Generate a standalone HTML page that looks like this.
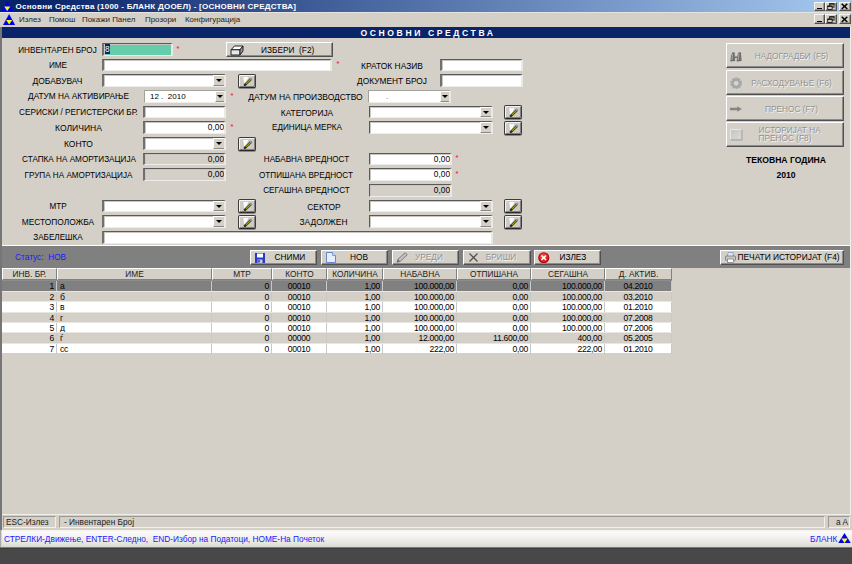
<!DOCTYPE html>
<html lang="mk"><head><meta charset="utf-8"><title>Основни Средства</title>
<style>
*{box-sizing:border-box;margin:0;padding:0}
html,body{width:852px;height:564px;overflow:hidden}
body{background:#d4d0c8;font-family:"Liberation Sans",sans-serif;font-size:8.3px;color:#000;position:relative}
.a{position:absolute;white-space:nowrap}
.l{position:absolute;white-space:nowrap;text-align:center;height:12px;line-height:12px;font-size:8.3px;color:#000}
.f{position:absolute;height:12px;background:#fff;border-top:1px solid #5a5a5a;border-left:1px solid #5a5a5a;border-bottom:1px solid #efede9;border-right:2px solid #ebe9e4;box-shadow:inset 1px 1px 0 #c8c6c0;font-size:8.3px;line-height:10px;white-space:nowrap;overflow:hidden}
.f.w{border-left:2px solid #707070}
.f.g{background:#d4d0c8}
.f.lt{border-top-color:#a4a29c;border-left:1px solid #a4a29c;box-shadow:none}
.f.lt .dd{width:10px}
.f.lt .dd:after{left:1.2px}
.f.r{text-align:right;padding-right:0px}
.dd{position:absolute;right:-1px;top:0px;width:12px;height:10px;background:#d4d0c8;border-top:1px solid #fff;border-left:1px solid #fff;border-bottom:1px solid #8a8a8a;border-right:1px solid #8a8a8a}
.dd:after{content:"";position:absolute;left:2px;top:2.5px;border-left:3px solid transparent;border-right:3px solid transparent;border-top:3.2px solid #000}
.pb{position:absolute;width:18px;height:14px;background:#cecbc5;border:1px solid #3c3c3c;border-bottom-color:#2a2a2a;border-radius:2px;box-shadow:inset 1px 1px 0 #f4f4f4,inset -1px -1px 0 #808080,0 1px 0 rgba(50,50,50,0.45)}
.pb svg{position:absolute;left:1.5px;top:0.5px}
.st{position:absolute;color:#ff2c4c;font-size:7.5px;line-height:8px;font-weight:bold}
.b{position:absolute;background:#d4d0c8;border-top:1px solid #fff;border-left:1px solid #fff;border-bottom:1px solid #505050;border-right:1px solid #505050;box-shadow:inset -1px -1px 0 #8c8c8c;white-space:nowrap;font-size:8.3px}
.b span{position:absolute}
.dis{color:#929292;text-shadow:0.7px 0.7px 0 #f4f4f4}
.gh{position:absolute;top:268px;height:12px;background:#d4d0c8;border-top:1px solid #fff;border-left:1px solid #fff;border-right:1px solid #808080;border-bottom:1px solid #808080;text-align:center;line-height:10px;font-size:8.3px;color:#222;white-space:nowrap}
.gr{position:absolute;left:2px;width:670px;height:10px}
.c{position:absolute;top:0;height:10px;line-height:10px;font-size:8.6px;letter-spacing:-0.3px;white-space:nowrap;border-right:1px solid #c8c8c8;color:#000}
.c.r{text-align:right;padding-right:2px}
.c.m{text-align:center}
.c.lf{text-align:left;padding-left:3px}
.tb{position:absolute;width:10px;height:9px;background:#d4d0c8;border-top:1px solid #f6f6f4;border-left:1px solid #f6f6f4;border-bottom:1px solid #505050;border-right:1px solid #505050;box-shadow:inset -1px -1px 0 #9a9890}
.sp{position:absolute;top:516px;height:12px;border-top:1px solid #9a9892;border-left:1px solid #9a9892;border-bottom:1px solid #f2f1ee;border-right:1px solid #f2f1ee;font-size:8.3px;line-height:10px;white-space:nowrap;color:#222}
</style></head>
<body>
<div class="a" style="left:0;top:0;width:852px;height:12px;background:linear-gradient(90deg,#0a246a 0%,#0a246a 5%,#a6caf0 100%)"></div>
<svg class="a" style="left:1.3px;top:1px" width="12.4" height="10.4" viewBox="0 0 12.4 10.4" preserveAspectRatio="none"><polygon points="6.2,0 12.4,10.4 0,10.4" fill="#0000f0"/><polygon points="3.2,5.6 9.3,5.6 6.25,9.9" fill="#ffff00"/></svg>
<div class="a" style="left:15.6px;top:0;height:12px;line-height:13px;font-weight:bold;color:#fff;font-size:8px;letter-spacing:0.25px" id="ttl">Основни Средства (1000 - БЛАНК ДООЕЛ) - [ОСНОВНИ СРЕДСТВА]</div>
<div class="tb" style="left:814px;top:2px;width:11px;height:9px"><i class="a" style="left:1.5px;top:4.5px;width:5px;height:1.5px;background:#000"></i></div>
<div class="tb" style="left:825px;top:2px;width:12px;height:9px"><svg class="a" style="left:1.2px;top:-0.4px" width="8" height="7.2" viewBox="0 0 8 7.5"><rect x="2.6" y="0.9" width="4.6" height="3.4" fill="none" stroke="#111" stroke-width="0.9"/><rect x="2.2" y="0.3" width="5.4" height="1.2" fill="#111"/><rect x="0.6" y="3.3" width="4.6" height="3.4" fill="#d4d0c8" stroke="#111" stroke-width="0.9"/><rect x="0.2" y="2.7" width="5.4" height="1.2" fill="#111"/></svg></div>
<div class="tb" style="left:839px;top:2px;width:12px;height:9px"><svg class="a" style="left:0.8px;top:0.2px" width="7" height="6.6" viewBox="0 0 7 7" preserveAspectRatio="none"><path d="M0.7 0.7 L6.3 6.3 M6.3 0.7 L0.7 6.3" stroke="#000" stroke-width="1.5"/></svg></div>
<div class="a" style="left:0;top:12px;width:852px;height:1px;background:#e6e4de"></div>
<svg class="a" style="left:3px;top:13.8px" width="12.2" height="11" viewBox="0 0 12.4 10.4" preserveAspectRatio="none"><polygon points="6.2,0 12.4,10.4 0,10.4" fill="#0000f0"/><polygon points="3.2,5.6 9.3,5.6 6.25,9.9" fill="#ffff00"/></svg>
<div class="a mi" style="left:19px;top:13px;height:13px;line-height:13px;font-size:7.95px;color:#222">Излез</div>
<div class="a mi" style="left:49px;top:13px;height:13px;line-height:13px;font-size:7.95px;color:#222">Помош</div>
<div class="a mi" style="left:82px;top:13px;height:13px;line-height:13px;font-size:7.95px;color:#222">Покажи Панел</div>
<div class="a mi" style="left:145px;top:13px;height:13px;line-height:13px;font-size:7.95px;color:#222">Прозори</div>
<div class="a mi" style="left:185px;top:13px;height:13px;line-height:13px;font-size:7.95px;color:#222">Конфигурација</div>
<div class="tb" style="left:814px;top:14px;width:11px;height:10px"><i class="a" style="left:1.5px;top:5.5px;width:5px;height:1.5px;background:#000"></i></div>
<div class="tb" style="left:825px;top:14px;width:12px;height:10px"><svg class="a" style="left:1.2px;top:0.6px" width="8" height="7.2" viewBox="0 0 8 7.5"><rect x="2.6" y="0.9" width="4.6" height="3.4" fill="none" stroke="#111" stroke-width="0.9"/><rect x="2.2" y="0.3" width="5.4" height="1.2" fill="#111"/><rect x="0.6" y="3.3" width="4.6" height="3.4" fill="#d4d0c8" stroke="#111" stroke-width="0.9"/><rect x="0.2" y="2.7" width="5.4" height="1.2" fill="#111"/></svg></div>
<div class="tb" style="left:839px;top:14px;width:12px;height:10px"><svg class="a" style="left:0.8px;top:1.2px" width="7" height="6.6" viewBox="0 0 7 7" preserveAspectRatio="none"><path d="M0.7 0.7 L6.3 6.3 M6.3 0.7 L0.7 6.3" stroke="#000" stroke-width="1.5"/></svg></div>
<div class="a" style="left:0;top:27px;width:2px;height:503px;background:#767676"></div>
<div class="a" style="left:850px;top:27px;width:1px;height:488px;background:#f0eee9"></div>
<div class="a" style="left:2px;top:27px;width:848px;height:11px;background:#0a246a"></div>
<div class="a" id="hd" style="left:360.5px;top:27px;height:11px;line-height:12px;color:#fff;font-weight:bold;font-size:8.6px;letter-spacing:2.58px">ОСНОВНИ СРЕДСТВА</div>
<div class="l" style="left:-12.5px;top:44.6px;width:140px;font-size:8.15px">ИНВЕНТАРЕН БРОЈ</div>
<div class="f w" style="left:102px;top:43px;width:71px;height:13px;line-height:11px;background:#66cdaa"><span style="background:#0a246a;color:#fff;margin-left:1px">8</span></div>
<div class="st" style="left:176.4px;top:44.9px">*</div>
<div class="l" style="left:-12.0px;top:59.6px;width:140px;font-size:8.15px">ИМЕ</div>
<div class="f  w" style="left:102px;top:59px;width:230px;height:12px;line-height:10px;"></div>
<div class="st" style="left:336.4px;top:59.9px">*</div>
<div class="l" style="left:-12.5px;top:74.6px;width:140px;font-size:8.45px">ДОБАВУВАЧ</div>
<div class="f  w" style="left:102px;top:74px;width:124px;height:13px;line-height:11px"><div class="dd" style="height:11px"></div></div>
<div class="pb" style="left:238px;top:74px"><svg width="13" height="11" viewBox="0 0 13 11"><path d="M2.2 1 L7.4 1 L3.6 9.2 Z" fill="#fff" opacity="0.92"/><path d="M3.9 8.9 L9.9 3.1" stroke="#2c2c2c" stroke-width="2.5" stroke-linecap="round"/><path d="M4.9 7.9 L9.3 3.7" stroke="#a0a000" stroke-width="1.3"/><path d="M9.5 3.5 L10.5 2.5" stroke="#ececec" stroke-width="1.5"/></svg></div>
<div class="l" style="left:8.5px;top:90.6px;width:140px;font-size:8.28px">ДАТУМ НА АКТИВИРАЊЕ</div>
<div class="f lt" style="left:144px;top:90px;width:82px;height:13px;line-height:11px"><span style="margin-left:5px;font-size:8px">12&nbsp;.&nbsp; 2010</span><div class="dd" style="height:11px"></div></div>
<div class="st" style="left:230.4px;top:91.9px">*</div>
<div class="l" style="left:8.5px;top:106.6px;width:140px;font-size:8.17px">СЕРИСКИ / РЕГИСТЕРСКИ БР.</div>
<div class="f  w" style="left:143px;top:106px;width:83px;height:12px;line-height:10px;"></div>
<div class="l" style="left:8.5px;top:121.6px;width:140px;font-size:8.55px">КОЛИЧИНА</div>
<div class="f r w" style="left:143px;top:121px;width:83px;height:13px;line-height:11px;">0,00</div>
<div class="st" style="left:230.4px;top:122.9px">*</div>
<div class="l" style="left:8.5px;top:137.6px;width:140px;font-size:8.48px">КОНТО</div>
<div class="f  w" style="left:143px;top:137px;width:83px;height:13px;line-height:11px"><div class="dd" style="height:11px"></div></div>
<div class="pb" style="left:238px;top:137px"><svg width="13" height="11" viewBox="0 0 13 11"><path d="M2.2 1 L7.4 1 L3.6 9.2 Z" fill="#fff" opacity="0.92"/><path d="M3.9 8.9 L9.9 3.1" stroke="#2c2c2c" stroke-width="2.5" stroke-linecap="round"/><path d="M4.9 7.9 L9.3 3.7" stroke="#a0a000" stroke-width="1.3"/><path d="M9.5 3.5 L10.5 2.5" stroke="#ececec" stroke-width="1.5"/></svg></div>
<div class="l" style="left:9.0px;top:153.6px;width:140px;font-size:8.17px">СТАПКА НА АМОРТИЗАЦИЈА</div>
<div class="f g r w" style="left:143px;top:153px;width:83px;height:12px;line-height:10px;">0,00</div>
<div class="l" style="left:8.5px;top:169.6px;width:140px;font-size:8.15px">ГРУПА НА АМОРТИЗАЦИЈА</div>
<div class="f g r w" style="left:143px;top:168px;width:83px;height:13px;line-height:11px;">0,00</div>
<div class="l" style="left:-12.0px;top:200.6px;width:140px;font-size:8.15px">МТР</div>
<div class="f  w" style="left:102px;top:200px;width:124px;height:12px;line-height:10px"><div class="dd" style="height:10px"></div></div>
<div class="pb" style="left:238px;top:199px"><svg width="13" height="11" viewBox="0 0 13 11"><path d="M2.2 1 L7.4 1 L3.6 9.2 Z" fill="#fff" opacity="0.92"/><path d="M3.9 8.9 L9.9 3.1" stroke="#2c2c2c" stroke-width="2.5" stroke-linecap="round"/><path d="M4.9 7.9 L9.3 3.7" stroke="#a0a000" stroke-width="1.3"/><path d="M9.5 3.5 L10.5 2.5" stroke="#ececec" stroke-width="1.5"/></svg></div>
<div class="l" style="left:-12.0px;top:215.6px;width:140px;font-size:8.37px">МЕСТОПОЛОЖБА</div>
<div class="f  w" style="left:102px;top:215px;width:124px;height:13px;line-height:11px"><div class="dd" style="height:11px"></div></div>
<div class="pb" style="left:238px;top:215px"><svg width="13" height="11" viewBox="0 0 13 11"><path d="M2.2 1 L7.4 1 L3.6 9.2 Z" fill="#fff" opacity="0.92"/><path d="M3.9 8.9 L9.9 3.1" stroke="#2c2c2c" stroke-width="2.5" stroke-linecap="round"/><path d="M4.9 7.9 L9.3 3.7" stroke="#a0a000" stroke-width="1.3"/><path d="M9.5 3.5 L10.5 2.5" stroke="#ececec" stroke-width="1.5"/></svg></div>
<div class="l" style="left:-12.0px;top:231.6px;width:140px;font-size:8.15px">ЗАБЕЛЕШКА</div>
<div class="f  w" style="left:102px;top:231px;width:391px;height:13px;line-height:11px;"></div>
<div class="l" style="left:235.5px;top:90.6px;width:140px;font-size:8.46px">ДАТУМ НА ПРОИЗВОДСТВО</div>
<div class="f lt" style="left:368px;top:90px;width:83px;height:13px;line-height:11px"><span style="margin-left:17px;color:#c060a0">.</span><div class="dd" style="height:11px"></div></div>
<div class="l" style="left:237.0px;top:106.6px;width:140px;font-size:8.37px">КАТЕГОРИЈА</div>
<div class="f " style="left:369px;top:106px;width:124px;height:12px;line-height:10px"><div class="dd" style="height:10px"></div></div>
<div class="pb" style="left:504px;top:105px"><svg width="13" height="11" viewBox="0 0 13 11"><path d="M2.2 1 L7.4 1 L3.6 9.2 Z" fill="#fff" opacity="0.92"/><path d="M3.9 8.9 L9.9 3.1" stroke="#2c2c2c" stroke-width="2.5" stroke-linecap="round"/><path d="M4.9 7.9 L9.3 3.7" stroke="#a0a000" stroke-width="1.3"/><path d="M9.5 3.5 L10.5 2.5" stroke="#ececec" stroke-width="1.5"/></svg></div>
<div class="l" style="left:237.0px;top:121.6px;width:140px;font-size:8.15px">ЕДИНИЦА МЕРКА</div>
<div class="f " style="left:369px;top:121px;width:124px;height:13px;line-height:11px"><div class="dd" style="height:11px"></div></div>
<div class="pb" style="left:504px;top:121px"><svg width="13" height="11" viewBox="0 0 13 11"><path d="M2.2 1 L7.4 1 L3.6 9.2 Z" fill="#fff" opacity="0.92"/><path d="M3.9 8.9 L9.9 3.1" stroke="#2c2c2c" stroke-width="2.5" stroke-linecap="round"/><path d="M4.9 7.9 L9.3 3.7" stroke="#a0a000" stroke-width="1.3"/><path d="M9.5 3.5 L10.5 2.5" stroke="#ececec" stroke-width="1.5"/></svg></div>
<div class="l" style="left:236.5px;top:153.6px;width:140px;font-size:8.15px">НАБАВНА ВРЕДНОСТ</div>
<div class="f r" style="left:369px;top:153px;width:83px;height:12px;line-height:10px;">0,00</div>
<div class="st" style="left:455.4px;top:153.9px">*</div>
<div class="l" style="left:236.0px;top:169.6px;width:140px;font-size:8.15px">ОТПИШАНА ВРЕДНОСТ</div>
<div class="f r" style="left:369px;top:168px;width:83px;height:13px;line-height:11px;">0,00</div>
<div class="st" style="left:455.4px;top:169.9px">*</div>
<div class="l" style="left:236.5px;top:184.6px;width:140px;font-size:8.18px">СЕГАШНА ВРЕДНОСТ</div>
<div class="f g r" style="left:369px;top:184px;width:83px;height:13px;line-height:11px;">0,00</div>
<div class="l" style="left:254.0px;top:200.6px;width:140px;font-size:8.42px">СЕКТОР</div>
<div class="f " style="left:369px;top:200px;width:124px;height:12px;line-height:10px"><div class="dd" style="height:10px"></div></div>
<div class="pb" style="left:504px;top:199px"><svg width="13" height="11" viewBox="0 0 13 11"><path d="M2.2 1 L7.4 1 L3.6 9.2 Z" fill="#fff" opacity="0.92"/><path d="M3.9 8.9 L9.9 3.1" stroke="#2c2c2c" stroke-width="2.5" stroke-linecap="round"/><path d="M4.9 7.9 L9.3 3.7" stroke="#a0a000" stroke-width="1.3"/><path d="M9.5 3.5 L10.5 2.5" stroke="#ececec" stroke-width="1.5"/></svg></div>
<div class="l" style="left:253.5px;top:215.6px;width:140px;font-size:8.39px">ЗАДОЛЖЕН</div>
<div class="f " style="left:369px;top:215px;width:124px;height:13px;line-height:11px"><div class="dd" style="height:11px"></div></div>
<div class="pb" style="left:504px;top:215px"><svg width="13" height="11" viewBox="0 0 13 11"><path d="M2.2 1 L7.4 1 L3.6 9.2 Z" fill="#fff" opacity="0.92"/><path d="M3.9 8.9 L9.9 3.1" stroke="#2c2c2c" stroke-width="2.5" stroke-linecap="round"/><path d="M4.9 7.9 L9.3 3.7" stroke="#a0a000" stroke-width="1.3"/><path d="M9.5 3.5 L10.5 2.5" stroke="#ececec" stroke-width="1.5"/></svg></div>
<div class="l" style="left:322.0px;top:59.6px;width:140px;font-size:8.45px">КРАТОК НАЗИВ</div>
<div class="f  w" style="left:440px;top:59px;width:83px;height:12px;line-height:10px;"></div>
<div class="l" style="left:322.0px;top:74.6px;width:140px;font-size:8.35px">ДОКУМЕНТ БРОЈ</div>
<div class="f  w" style="left:440px;top:74px;width:83px;height:13px;line-height:11px;"></div>
<div class="b" style="left:226px;top:42px;width:107px;height:15px"><svg class="a" style="left:3px;top:1.5px" width="14" height="11" viewBox="0 0 14 11"><path d="M4.5 1 L13 1 L10 4.8 L1 4.8 Z" fill="#fff" stroke="#222" stroke-width="1"/><path d="M1 4.8 L1 10 L10 10 L10 4.8 Z" fill="#e8e8e8" stroke="#222" stroke-width="1"/><path d="M10 10 L13 6 L13 1 L10 4.8 Z" fill="#9a9a9a" stroke="#222" stroke-width="1"/></svg><span style="left:34px;top:0.5px;line-height:13px">ИЗБЕРИ&nbsp; (F2)</span></div>
<div class="b" style="left:726px;top:43px;width:118px;height:25px"><svg class="a" style="left:3px;top:8px" width="12" height="10" viewBox="0 0 12 10"><path d="M0.3 9.6 L1 4 L2.2 0.6 L4.6 0.2 L5.2 9 Z M6.6 9.6 L7.3 4 L8.5 0.6 L10.9 0.2 L11.6 9 Z" fill="#6e6e6e"/><path d="M5 5.2 L7 5.2" stroke="#6e6e6e" stroke-width="1.6"/><path d="M2.6 2 L2 8 M8.9 2 L8.3 8" stroke="#b8b8b8" stroke-width="0.8"/></svg><span class="dis" style="left:15.5px;width:98px;text-align:center;top:0.5px;line-height:23px">НАДОГРАДБИ (F5)</span></div>
<div class="b" style="left:726px;top:70px;width:118px;height:25px"><svg class="a" style="left:2.5px;top:5.5px" width="12.4" height="12.4" viewBox="0 0 12 12"><circle cx="6" cy="6" r="5.1" fill="none" stroke="#acacac" stroke-width="1.5" stroke-dasharray="2 1.2"/><circle cx="6" cy="6" r="3.5" fill="none" stroke="#a6a6a6" stroke-width="2.6"/><circle cx="6" cy="6" r="2.2" fill="#d6d3cc"/></svg><span class="dis" style="left:15.5px;width:98px;text-align:center;top:0.5px;line-height:23px">РАСХОДУВАЊЕ (F6)</span></div>
<div class="b" style="left:726px;top:96px;width:118px;height:25px"><svg class="a" style="left:3px;top:8.8px" width="12" height="6" viewBox="0 0 12 6"><path d="M0 1.8 L7.3 1.8 L7.3 0.2 L11.8 3 L7.3 5.8 L7.3 4.2 L0 4.2 Z" fill="#848484"/></svg><span class="dis" style="left:15.5px;width:98px;text-align:center;top:0.5px;line-height:23px">ПРЕНОС (F7)</span></div>
<div class="b" style="left:726px;top:122px;width:118px;height:25px"><i class="a" style="left:2.5px;top:5.5px;width:12px;height:11px;border:1px solid #b4b4b4;border-top-color:#e8e8e8;border-left-color:#e8e8e8;background:linear-gradient(135deg,#c4c4c4,#dcdad6);box-shadow:0.5px 0.5px 0 #a0a0a0"></i><span class="dis" style="left:31.5px;top:2.5px;line-height:8.6px;text-align:left">ИСТОРИЈАТ НА<br>ПРЕНОС (F8)</span></div>
<div class="a" style="left:726px;width:120px;top:154px;height:12px;line-height:12px;text-align:center;font-weight:bold;font-size:8.6px;color:#000">ТЕКОВНА ГОДИНА</div>
<div class="a" style="left:726px;width:120px;top:169px;height:12px;line-height:12px;text-align:center;font-weight:bold;font-size:8.6px;color:#000">2010</div>
<div class="a" style="left:2px;top:245px;width:848px;height:1px;background:#fff"></div>
<div class="a" style="left:2px;top:246px;width:848px;height:22px;background:#808080"></div>
<div class="a" style="left:15px;top:251px;height:12px;line-height:12px;color:#1a1aff;font-size:8.3px">Статус:&nbsp; НОВ</div>
<div class="b" style="left:250px;top:250px;width:67px;height:15px"><svg class="a" style="left:3.5px;top:1.5px" width="10" height="10" viewBox="0 0 10 10"><rect x="0" y="0" width="10" height="10" fill="#2838c8"/><rect x="2" y="0.5" width="6" height="4" fill="#fff"/><rect x="2.5" y="6.5" width="5" height="3.5" fill="#c8c8d8"/><rect x="3.2" y="7" width="1.5" height="2.5" fill="#2838c8"/></svg><span class=" tbt" style="left:23.5px;top:0;line-height:13px">СНИМИ</span></div>
<div class="b" style="left:321px;top:250px;width:67px;height:15px"><svg class="a" style="left:4px;top:0.5px" width="10" height="11" viewBox="0 0 10 11"><path d="M0.5 0.5 L6.5 0.5 L9.5 3.5 L9.5 10.5 L0.5 10.5 Z" fill="#e4eeff" stroke="#6a88c8" stroke-width="1"/><path d="M6.5 0.5 L6.5 3.5 L9.5 3.5" fill="#d8e4f8" stroke="#6a88c8" stroke-width="0.8"/></svg><span class=" tbt" style="left:28px;top:0;line-height:13px">НОВ</span></div>
<div class="b" style="left:392px;top:250px;width:67px;height:15px"><svg class="a" style="left:3px;top:0.5px" width="12" height="11" viewBox="0 0 12 11"><path d="M1 10.3 L2 7.2 L9.2 0.8 L11.2 2.8 L4.2 9.3 Z" fill="#c4c4c4" stroke="#707070" stroke-width="0.9"/><path d="M1 10.3 L2 7.2 L4.2 9.3 Z" fill="#707070"/></svg><span class="dis tbt" style="left:22px;top:0;line-height:13px">УРЕДИ</span></div>
<div class="b" style="left:463px;top:250px;width:68px;height:15px"><svg class="a" style="left:4.5px;top:2px" width="9" height="9" viewBox="0 0 9 9"><path d="M0.5 0.5 L8.5 8.5 M8.5 0.5 L0.5 8.5" stroke="#505050" stroke-width="1.3"/></svg><span class="dis tbt" style="left:21.7px;top:0;line-height:13px">БРИШИ</span></div>
<div class="b" style="left:534px;top:250px;width:67px;height:15px"><svg class="a" style="left:3px;top:0.8px" width="11.5" height="11.5" viewBox="0 0 11 11"><circle cx="5.5" cy="5.5" r="5.3" fill="#b00808"/><circle cx="5.5" cy="5.3" r="4.4" fill="#e02020"/><circle cx="5" cy="4.4" r="3" fill="#ff5050" opacity="0.7"/><path d="M3.3 3.3 L7.7 7.7 M7.7 3.3 L3.3 7.7" stroke="#fff" stroke-width="1.5"/></svg><span class=" tbt" style="left:24.5px;top:0;line-height:13px">ИЗЛЕЗ</span></div>
<div class="b" style="left:720px;top:250px;width:124px;height:15px"><svg class="a" style="left:4px;top:1px" width="11" height="11" viewBox="0 0 11 11"><path d="M2.5 4 L3 0.5 L8 0.5 L8.5 4" fill="#dce8fa" stroke="#8090a8" stroke-width="0.7"/><rect x="0.5" y="4" width="10" height="4.5" rx="1" fill="#c8c8c8" stroke="#666" stroke-width="0.7"/><rect x="2.5" y="7" width="6" height="3.5" fill="#fff" stroke="#777" stroke-width="0.7"/></svg><span class="tbt" style="left:16.5px;top:0;line-height:13px;font-size:8.4px">ПЕЧАТИ ИСТОРИЈАТ (F4)</span></div>
<div class="gh" style="left:2px;width:55px">ИНВ. БР.</div>
<div class="gh" style="left:57px;width:155px">ИМЕ</div>
<div class="gh" style="left:212px;width:60px">МТР</div>
<div class="gh" style="left:272px;width:55px">КОНТО</div>
<div class="gh" style="left:327px;width:56px">КОЛИЧИНА</div>
<div class="gh" style="left:383px;width:74px">НАБАВНА</div>
<div class="gh" style="left:457px;width:74px">ОТПИШАНА</div>
<div class="gh" style="left:531px;width:74px">СЕГАШНА</div>
<div class="gh" style="left:605px;width:67px">Д. АКТИВ.</div>
<div class="gr" style="top:280px;height:11px;background:#808080;border-top:1px solid #8c8c8c"><div class="c r" style="left:0px;width:55px">1</div><div class="c lf" style="left:55px;width:155px">а</div><div class="c r" style="left:210px;width:60px">0</div><div class="c m" style="left:270px;width:55px">00010</div><div class="c r" style="left:325px;width:56px">1,00</div><div class="c r" style="left:381px;width:74px">100.000,00</div><div class="c r" style="left:455px;width:74px">0,00</div><div class="c r" style="left:529px;width:74px">100.000,00</div><div class="c m" style="left:603px;width:67px">04.2010</div></div>
<div class="gr" style="top:291px;height:10px;background:#d4d0c8;border-top:1px solid #e8e6e0"><div class="c r" style="left:0px;width:55px">2</div><div class="c lf" style="left:55px;width:155px">б</div><div class="c r" style="left:210px;width:60px">0</div><div class="c m" style="left:270px;width:55px">00010</div><div class="c r" style="left:325px;width:56px">1,00</div><div class="c r" style="left:381px;width:74px">100.000,00</div><div class="c r" style="left:455px;width:74px">0,00</div><div class="c r" style="left:529px;width:74px">100.000,00</div><div class="c m" style="left:603px;width:67px">03.2010</div></div>
<div class="gr" style="top:301px;height:11px;background:#fff;border-top:1px solid #e8e6e0"><div class="c r" style="left:0px;width:55px">3</div><div class="c lf" style="left:55px;width:155px">в</div><div class="c r" style="left:210px;width:60px">0</div><div class="c m" style="left:270px;width:55px">00010</div><div class="c r" style="left:325px;width:56px">1,00</div><div class="c r" style="left:381px;width:74px">100.000,00</div><div class="c r" style="left:455px;width:74px">0,00</div><div class="c r" style="left:529px;width:74px">100.000,00</div><div class="c m" style="left:603px;width:67px">01.2010</div></div>
<div class="gr" style="top:312px;height:10px;background:#d4d0c8;border-top:1px solid #e8e6e0"><div class="c r" style="left:0px;width:55px">4</div><div class="c lf" style="left:55px;width:155px">г</div><div class="c r" style="left:210px;width:60px">0</div><div class="c m" style="left:270px;width:55px">00010</div><div class="c r" style="left:325px;width:56px">1,00</div><div class="c r" style="left:381px;width:74px">100.000,00</div><div class="c r" style="left:455px;width:74px">0,00</div><div class="c r" style="left:529px;width:74px">100.000,00</div><div class="c m" style="left:603px;width:67px">07.2008</div></div>
<div class="gr" style="top:322px;height:10px;background:#fff;border-top:1px solid #e8e6e0"><div class="c r" style="left:0px;width:55px">5</div><div class="c lf" style="left:55px;width:155px">д</div><div class="c r" style="left:210px;width:60px">0</div><div class="c m" style="left:270px;width:55px">00010</div><div class="c r" style="left:325px;width:56px">1,00</div><div class="c r" style="left:381px;width:74px">100.000,00</div><div class="c r" style="left:455px;width:74px">0,00</div><div class="c r" style="left:529px;width:74px">100.000,00</div><div class="c m" style="left:603px;width:67px">07.2006</div></div>
<div class="gr" style="top:332px;height:11px;background:#d4d0c8;border-top:1px solid #e8e6e0"><div class="c r" style="left:0px;width:55px">6</div><div class="c lf" style="left:55px;width:155px">ѓ</div><div class="c r" style="left:210px;width:60px">0</div><div class="c m" style="left:270px;width:55px">00000</div><div class="c r" style="left:325px;width:56px">1,00</div><div class="c r" style="left:381px;width:74px">12.000,00</div><div class="c r" style="left:455px;width:74px">11.600,00</div><div class="c r" style="left:529px;width:74px">400,00</div><div class="c m" style="left:603px;width:67px">05.2005</div></div>
<div class="gr" style="top:343px;height:10px;background:#fff;border-top:1px solid #e8e6e0"><div class="c r" style="left:0px;width:55px">7</div><div class="c lf" style="left:55px;width:155px">сс</div><div class="c r" style="left:210px;width:60px">0</div><div class="c m" style="left:270px;width:55px">00010</div><div class="c r" style="left:325px;width:56px">1,00</div><div class="c r" style="left:381px;width:74px">222,00</div><div class="c r" style="left:455px;width:74px">0,00</div><div class="c r" style="left:529px;width:74px">222,00</div><div class="c m" style="left:603px;width:67px">01.2010</div></div>
<div class="a" style="left:2px;top:514px;width:849px;height:1px;background:#f0eee9"></div>
<div class="sp" style="left:3px;width:53px;padding-left:2px">ESC-Излез</div>
<div class="sp" style="left:59px;width:766px;padding-left:4px">- Инвентарен Број</div>
<div class="sp" style="left:828px;width:22px;padding-left:7px">a A</div>
<div class="a" style="left:0;top:530px;width:852px;height:17px;background:linear-gradient(180deg,#f2f1ee 0,#fbfbf9 2px,#f3f2ef 7px,#e9e8e3 12px,#dbd9d3 17px)"></div>
<div class="a" style="left:0;top:530px;width:1px;height:17px;background:#a8a8a6"></div><div class="a" style="left:1px;top:530px;width:1px;height:17px;background:#d8d7d4"></div>
<div class="a" style="left:4px;top:533px;height:12px;line-height:12px;color:#1a1aff;font-size:8.3px" id="bt">СТРЕЛКИ-Движење, ENTER-Следно,&nbsp; END-Избор на Податоци, HOME-На Почеток</div>
<div class="a" style="left:810px;top:533px;height:12px;line-height:12px;color:#1a1aff;font-size:8.3px">БЛАНК</div>
<svg class="a" style="left:838.4px;top:533px" width="13" height="10.4" viewBox="0 0 12.4 10.4" preserveAspectRatio="none"><polygon points="6.2,0 12.4,10.4 0,10.4" fill="#0000f0"/><polygon points="3.2,5.6 9.3,5.6 6.25,9.9" fill="#ffff00"/></svg>
<div class="a" style="left:0;top:547px;width:852px;height:17px;background:#484848;border-top:1px solid #7c7b78"></div>
<div class="a" style="left:0;top:548px;width:852px;height:1px;background:#3c3c3c"></div>
</body></html>
